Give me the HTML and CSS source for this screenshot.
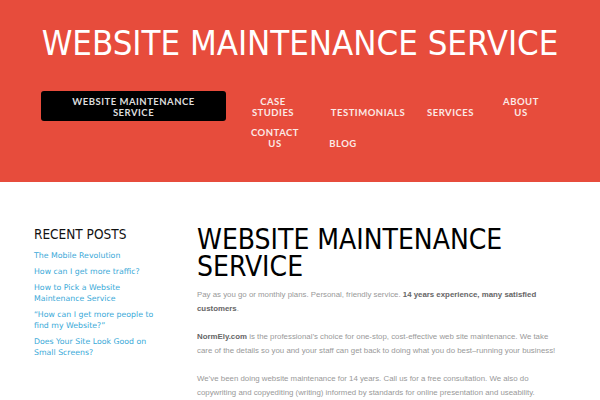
FILE: index.html
```html
<!DOCTYPE html>
<html>
<head>
<meta charset="utf-8">
<link rel="stylesheet" href="styles.css">
</head>
<body>
<header class="site-header">
  <h1 class="site-title">WEBSITE MAINTENANCE SERVICE</h1>
  <div class="header-bar">
    <div class="branding">WEBSITE MAINTENANCE<br>SERVICE</div>
    <ul class="menu">
      <li class="mi mi-case">CASE<br>STUDIES</li>
      <li class="mi mi-test">TESTIMONIALS</li>
      <li class="mi mi-serv">SERVICES</li>
      <li class="mi mi-about">ABOUT<br>US</li>
      <li class="mi mi-contact">CONTACT<br>US</li>
      <li class="mi mi-blog">BLOG</li>
    </ul>
  </div>
</header>
<div class="content">
  <aside class="sidebar">
    <h3 class="widget-title">RECENT POSTS</h3>
    <ul class="posts">
      <li><a>The Mobile Revolution</a></li>
      <li><a>How can I get more traffic?</a></li>
      <li><a>How to Pick a Website Maintenance Service</a></li>
      <li><a>“How can I get more people to find my Website?”</a></li>
      <li><a>Does Your Site Look Good on Small Screens?</a></li>
    </ul>
    <h3 class="widget-title archives">ARCHIVES</h3>
  </aside>
  <main class="main">
    <h2 class="page-title">WEBSITE MAINTENANCE SERVICE</h2>
    <p>Pay as you go or monthly plans. Personal, friendly service. <b>14 years experience, many satisfied customers</b>.</p>
    <p><b>NormEly.com</b> is the professional’s choice for one-stop, cost-effective web site maintenance. We take care of the details so you and your staff can get back to doing what you do best–running your business!</p>
    <p>We’ve been doing website maintenance for 14 years. Call us for a free consultation. We also do copywriting and copyediting (writing) informed by standards for online presentation and useability.</p>
  </main>
</div>
</body>
</html>
```
FILE: styles.css
```css
html, body { margin: 0; padding: 0; background: #fff; }
body { font-family: "DejaVu Sans", sans-serif; overflow: hidden; }

.site-header {
  background: #e74c3c;
  height: 182px;
  box-sizing: border-box;
  padding-top: 23px;
}
.site-title {
  margin: 0;
  font-family: "DejaVu Sans Condensed", "DejaVu Sans", sans-serif;
  font-stretch: condensed;
  font-weight: normal;
  font-size: 34.5px;
  line-height: 40px;
  color: #fff;
  text-align: center;
}
.header-bar {
  display: flex;
  align-items: flex-start;
  margin-top: 28px;
  padding-left: 41px;
}
.branding {
  width: 185px;
  height: 30px;
  box-sizing: border-box;
  padding-top: 4.5px;
  background: #000;
  border-radius: 3px;
  color: #ddd;
  text-align: center;
  font-family: "Lato", sans-serif;
  font-weight: bold;
  font-size: 9.5px;
  line-height: 11px;
  letter-spacing: 0.5px;
}
.menu {
  list-style: none;
  margin: 4.5px 0 0 14px;
  padding: 0;
  width: 305px;
  font-size: 0;
  line-height: 0;
}
.mi {
  display: inline-block;
  vertical-align: baseline;
  text-align: center;
  color: #fbe9e6;
  font-family: "Lato", sans-serif;
  font-weight: bold;
  font-size: 9.5px;
  line-height: 11px;
  letter-spacing: 0.5px;
  white-space: nowrap;
}
.mi-case { width: 60px; margin-left: 3px; }
.mi-test { width: 80px; margin-left: 25px; }
.mi-serv { width: 56px; margin-left: 14.5px; }
.mi-about { width: 40px; margin-left: 22.5px; }
.mi-contact { width: 60px; margin-left: 5px; margin-top: 9px; }
.mi-blog { width: 40px; margin-left: 18px; }

.content {
  display: flex;
  padding: 44px 0 0 34px;
}
.sidebar {
  width: 130px;
  flex: none;
}
.widget-title {
  margin: 0 0 8px;
  font-family: "DejaVu Sans Condensed", "DejaVu Sans", sans-serif;
  font-stretch: condensed;
  font-weight: normal;
  font-size: 13.5px;
  line-height: 16px;
  color: #111;
}
.posts {
  list-style: none;
  margin: 0;
  padding: 0;
}
.posts li {
  margin-bottom: 5px;
  font-family: "DejaVu Sans", sans-serif;
  font-size: 7.8px;
  line-height: 11px;
  color: #39a9d8;
}
.archives { margin-top: 40px; }

.main {
  margin-left: 33px;
  width: 368px;
}
.page-title {
  margin: 0 0 8px;
  font-family: "DejaVu Sans Condensed", "DejaVu Sans", sans-serif;
  font-stretch: condensed;
  font-weight: normal;
  font-size: 28px;
  line-height: 27px;
  color: #000;
}
.main p {
  margin: 0 0 15px;
  font-family: "Liberation Sans", Arial, sans-serif;
  font-size: 7.85px;
  line-height: 13.5px;
  color: #999;
}
.main p b { color: #666; }
```
